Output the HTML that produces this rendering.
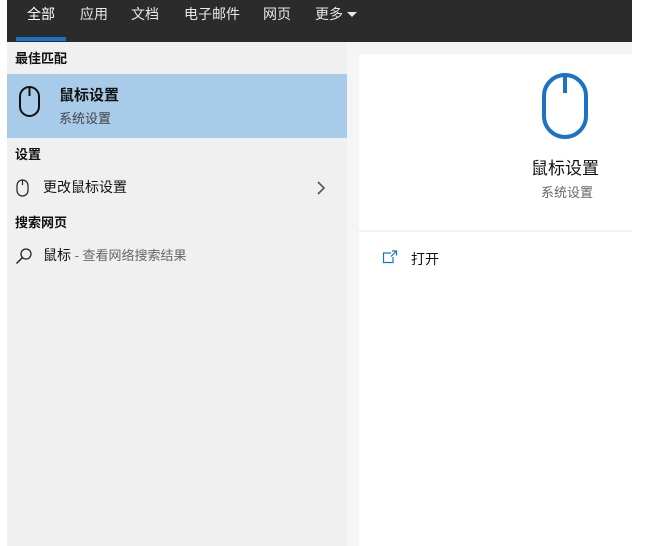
<!DOCTYPE html>
<html><head><meta charset="utf-8"><style>
*{margin:0;padding:0;box-sizing:border-box}
body{width:649px;height:546px;background:#fff;position:relative;overflow:hidden;font-family:"Liberation Sans","Noto Sans CJK SC",sans-serif}
.a{position:absolute}
.top{left:7px;top:0;width:625px;height:42px;background:#2b2b2b}
.tab{top:4px;font-size:14px;color:#e8e8e8}
.left{left:7px;top:42px;width:340px;height:504px;background:#f0f0f0}
.strip{left:347px;top:42px;width:12px;height:504px;background:#f5f5f5}
.strip2{left:359px;top:42px;width:273px;height:12px;background:#f5f5f5}
.card{left:359px;top:54px;width:273px;height:492px;background:#fff}
.sep{left:359px;top:230px;width:273px;height:2px;background:#f2f2f2}
.h{font-size:13px;font-weight:bold;color:#111}
.t{font-size:14px;color:#111}
</style></head><body>
<div class="a top"></div>
<div class="a tab" style="left:27px;color:#fff">全部</div>
<div class="a tab" style="left:80px">应用</div>
<div class="a tab" style="left:131px">文档</div>
<div class="a tab" style="left:184px">电子邮件</div>
<div class="a tab" style="left:263px">网页</div>
<div class="a tab" style="left:315px">更多</div>
<svg class="a" style="left:346px;top:11px" width="12" height="8"><path d="M1 1L6 6L11 1Z" fill="#e8e8e8"/></svg>
<div class="a" style="left:16px;top:37px;width:50px;height:4px;background:#1a73c6"></div>
<div class="a left"></div>
<div class="a strip"></div>
<div class="a strip2"></div>
<div class="a card"></div>
<div class="a sep"></div>
<div class="a h" style="left:15px;top:48px">最佳匹配</div>
<div class="a" style="left:7px;top:74px;width:340px;height:64px;background:#a8cbea"></div>
<svg class="a" style="left:18px;top:85px" width="24" height="34"><rect x="2" y="2" width="19" height="29" rx="9.5" fill="none" stroke="#111" stroke-width="2"/><line x1="11.5" y1="2" x2="11.5" y2="11" stroke="#111" stroke-width="2"/></svg>
<div class="a" style="left:59px;top:84px;font-size:15px;font-weight:bold;color:#111">鼠标设置</div>
<div class="a" style="left:59px;top:108px;font-size:13px;color:#444">系统设置</div>
<div class="a h" style="left:15px;top:144px">设置</div>
<svg class="a" style="left:16px;top:179px" width="14" height="18"><rect x="1" y="1" width="11" height="16" rx="5.5" fill="none" stroke="#222" stroke-width="1.2"/><line x1="6.5" y1="1" x2="6.5" y2="6" stroke="#222" stroke-width="1.2"/></svg>
<div class="a t" style="left:43px;top:177px">更改鼠标设置</div>
<svg class="a" style="left:316px;top:181px" width="10" height="14"><path d="M2 1L8 7L2 13" fill="none" stroke="#555" stroke-width="1.6"/></svg>
<div class="a h" style="left:15px;top:212px">搜索网页</div>
<svg class="a" style="left:15px;top:247px" width="18" height="18"><circle cx="11" cy="7" r="5" fill="none" stroke="#222" stroke-width="1.3"/><line x1="7.5" y1="10.5" x2="1.5" y2="16.5" stroke="#222" stroke-width="1.5"/></svg>
<div class="a t" style="left:43px;top:245px">鼠标<span style="font-size:13px;color:#666"> - 查看网络搜索结果</span></div>
<svg class="a" style="left:541px;top:72px" width="48" height="68"><rect x="3" y="3" width="42" height="62" rx="21" fill="none" stroke="#1a73c6" stroke-width="4"/><line x1="24" y1="3" x2="24" y2="21" stroke="#1a73c6" stroke-width="4"/></svg>
<div class="a" style="left:531px;top:154px;font-size:17px;color:#111">鼠标设置</div>
<div class="a" style="left:541px;top:182px;font-size:13px;color:#666">系统设置</div>
<svg class="a" style="left:382px;top:250px" width="16" height="14"><path d="M9 3H1.5V12.5H11V7" fill="none" stroke="#1a73c6" stroke-width="1.2"/><path d="M10 1H14.5V5.5M14.5 1L9 6.5" fill="none" stroke="#1a73c6" stroke-width="1.2"/></svg>
<div class="a" style="left:411px;top:249px;font-size:14px;color:#111">打开</div>
</body></html>
